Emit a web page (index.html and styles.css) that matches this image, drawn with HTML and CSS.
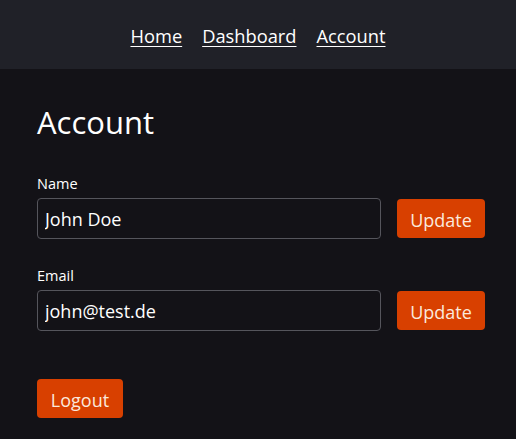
FILE: index.html
```html
<!DOCTYPE html>
<html lang="en">
<head>
<meta charset="utf-8">
<title>Account</title>
<link rel="stylesheet" href="styles.css">
</head>
<body>
<header class="topbar">
  <nav class="nav">
    <a href="#" class="nav-link">Home</a>
    <a href="#" class="nav-link">Dashboard</a>
    <a href="#" class="nav-link">Account</a>
  </nav>
</header>
<main class="content">
  <h1 class="title">Account</h1>
  <div class="field">
    <label class="label" for="name">Name</label>
    <div class="row">
      <input class="input" id="name" type="text" value="John Doe">
      <button class="btn">Update</button>
    </div>
  </div>
  <div class="field">
    <label class="label" for="email">Email</label>
    <div class="row">
      <input class="input" id="email" type="text" value="john@test.de">
      <button class="btn">Update</button>
    </div>
  </div>
  <button class="btn btn-logout">Logout</button>
</main>
</body>
</html>
```

FILE: styles.css
```css
html, body {
  margin: 0;
  padding: 0;
  background: #131217;
  color: #ffffff;
  font-family: "Open Sans", "Noto Sans", sans-serif;
}
.topbar {
  height: 69px;
  background: #202128;
  display: flex;
  align-items: center;
  justify-content: center;
}
.nav {
  display: flex;
  gap: 20px;
  padding-top: 1px;
}
.nav-link {
  color: #ffffff;
  font-size: 18.3px;
  text-decoration: underline;
  text-underline-offset: 3px;
  text-decoration-thickness: 1px;
}
.content {
  padding: 0 31px 0 37px;
}
.title {
  margin: 32px 0 31px;
  font-size: 31px;
  font-weight: 400;
  line-height: 42px;
}
.field {
  margin-bottom: 27px;
}
.label {
  display: block;
  font-size: 14.5px;
  line-height: 20px;
  margin-bottom: 4px;
}
.row {
  display: flex;
  align-items: center;
  gap: 16px;
}
.input {
  flex: 1;
  box-sizing: border-box;
  height: 41px;
  background: #131217;
  border: 1px solid #55555c;
  border-radius: 4px;
  color: #ffffff;
  font-family: inherit;
  font-size: 18px;
  padding: 1px 7px 0;
  outline: none;
}
.btn {
  box-sizing: border-box;
  height: 39px;
  width: 88px;
  background: #d84000;
  border: none;
  border-radius: 4px;
  color: #fbe9dc;
  font-family: inherit;
  font-size: 18px;
  padding: 2px 0 0;
}
.btn-logout {
  width: 86px;
  margin-top: 21px;
}
```
